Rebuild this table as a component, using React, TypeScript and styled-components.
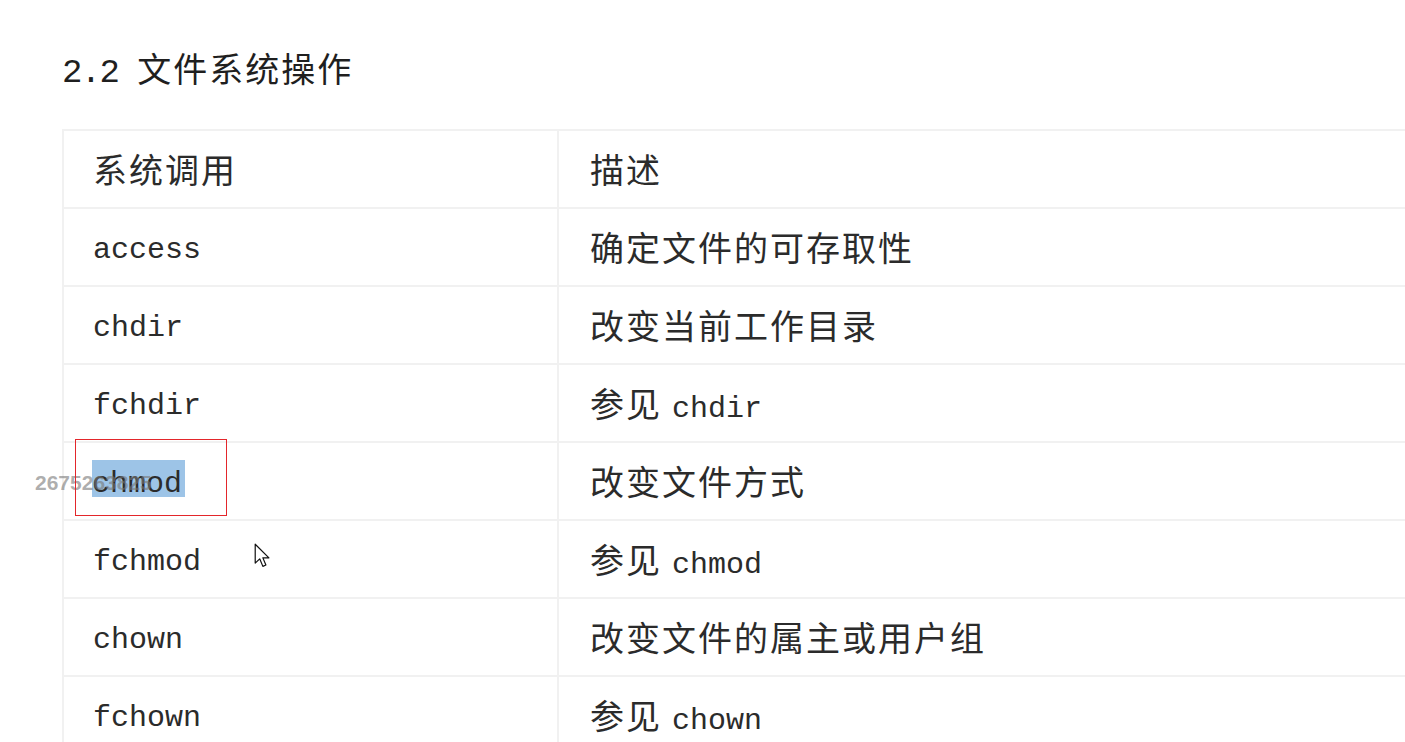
import React from 'react';
import styled, { createGlobalStyle } from 'styled-components';

const GlobalStyle = createGlobalStyle`
  html, body {
    margin: 0;
    padding: 0;
    background: #fff;
    overflow: hidden;
  }
  body {
    width: 1405px;
    height: 742px;
    font-family: "Liberation Mono", "Noto Sans CJK SC", monospace;
    color: #2a2a2a;
  }
`;

const Page = styled.div`
  position: relative;
  padding: 50px 0 0 62px;
  height: 742px;
  box-sizing: border-box;
`;

const Heading = styled.h2`
  margin: 0 0 39px;
  height: 40px;
  display: flex;
  align-items: center;
  font-size: 34px;
  letter-spacing: -1.6px;
  font-weight: normal;
  color: #1f1f1f;
  white-space: pre;
`;

const Line = styled.span`
  white-space: pre;
  line-height: 40px;
`;

const Cjk = styled.span`
  font-family: "Noto Sans CJK SC", sans-serif;
  font-size: 34px;
  letter-spacing: 2px;
`;

const Table = styled.div`
  display: grid;
  grid-template-columns: 495px 1fr;
  width: 1400px;
  border-top: 2px solid #f1f1f1;
  border-left: 2px solid #f1f1f1;
`;

const Cell = styled.div<{ $col: number }>`
  position: relative;
  height: 70px;
  display: flex;
  align-items: center;
  padding-top: 6px;
  padding-left: ${p => (p.$col === 0 ? 29 : 31)}px;
  border-bottom: 2px solid #f1f1f1;
  border-right: ${p => (p.$col === 0 ? '2px solid #f1f1f1' : 'none')};
  font-size: 30px;
  word-spacing: -8px;
  white-space: nowrap;
  color: #2b2b2b;
`;

const Selected = styled.span`
  padding: 7px 3px 0 0;
  margin-left: -1px;
  background: linear-gradient(#9dc4e7, #9dc4e7) top left / 100% calc(100% - 4px) no-repeat;
`;

const MarkBox = styled.div`
  position: absolute;
  left: 11px;
  top: -4px;
  width: 150px;
  height: 75px;
  border: 1.5px solid #e3262b;
  pointer-events: none;
`;

const Watermark = styled.span`
  position: absolute;
  left: -29px;
  top: 28px;
  font-family: "Liberation Sans", Arial, sans-serif;
  font-weight: bold;
  font-size: 21px;
  word-spacing: normal;
  color: rgba(120, 120, 120, 0.6);
`;

const Cursor = styled.svg`
  position: absolute;
  left: 254px;
  top: 543px;
`;

const mixed = (text: string) => (
  <Line>
    {text.split(/([\u4e00-\u9fff]+)/).filter(Boolean).map((part, i) =>
      /[\u4e00-\u9fff]/.test(part) ? <Cjk key={i}>{part}</Cjk> : <React.Fragment key={i}>{part}</React.Fragment>
    )}
  </Line>
);

const rows: [string, string][] = [
  ['access', '确定文件的可存取性'],
  ['chdir', '改变当前工作目录'],
  ['fchdir', '参见 chdir'],
  ['chmod', '改变文件方式'],
  ['fchmod', '参见 chmod'],
  ['chown', '改变文件的属主或用户组'],
  ['fchown', '参见 chown'],
];

export default function App() {
  return (
    <Page>
      <GlobalStyle />
      <Heading>{mixed('2.2 文件系统操作')}</Heading>
      <Table>
        <Cell $col={0}>{mixed('系统调用')}</Cell>
        <Cell $col={1}>{mixed('描述')}</Cell>
        {rows.map(([call, desc]) => (
          <React.Fragment key={call}>
            <Cell $col={0}>
              {call === 'chmod' ? (
                <>
                  <Watermark>2675263825</Watermark>
                  <Line>
                    <Selected>chmod</Selected>
                  </Line>
                  <MarkBox />
                </>
              ) : (
                call
              )}
            </Cell>
            <Cell $col={1}>{mixed(desc)}</Cell>
          </React.Fragment>
        ))}
      </Table>
      <Cursor width="17" height="25" viewBox="0 0 14 20.5">
        <path
          d="M1 1 L1 16.5 L4.7 13 L7.3 19.2 L9.8 18.1 L7.3 12.2 L12.3 12.2 Z"
          fill="#fff"
          stroke="#111"
          strokeWidth="1"
          strokeLinejoin="round"
        />
      </Cursor>
    </Page>
  );
}
